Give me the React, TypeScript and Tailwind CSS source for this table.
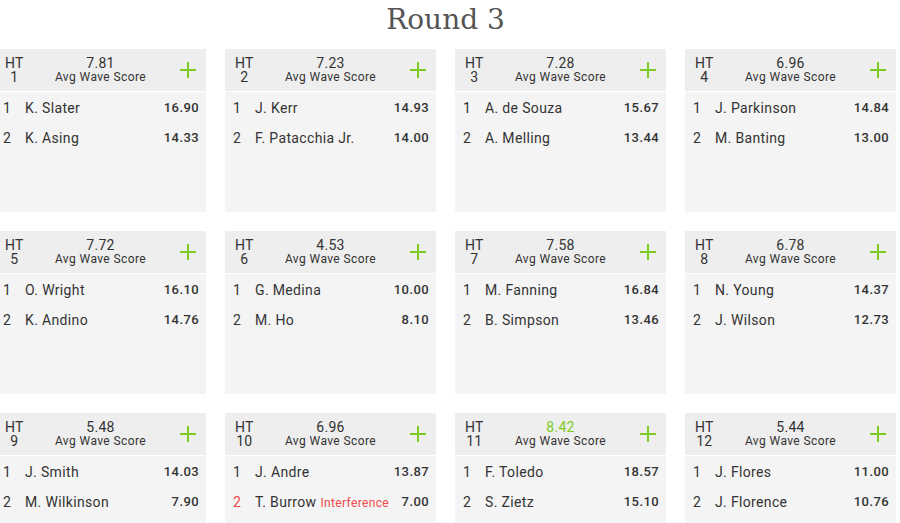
import React from "react";

type Surfer = { pos: number; name: string; score: string; interference?: boolean };
type Heat = { ht: number; avg: string; best?: boolean; surfers: Surfer[] };

const heats: Heat[] = [
  { ht: 1, avg: "7.81", surfers: [{ pos: 1, name: "K. Slater", score: "16.90" }, { pos: 2, name: "K. Asing", score: "14.33" }] },
  { ht: 2, avg: "7.23", surfers: [{ pos: 1, name: "J. Kerr", score: "14.93" }, { pos: 2, name: "F. Patacchia Jr.", score: "14.00" }] },
  { ht: 3, avg: "7.28", surfers: [{ pos: 1, name: "A. de Souza", score: "15.67" }, { pos: 2, name: "A. Melling", score: "13.44" }] },
  { ht: 4, avg: "6.96", surfers: [{ pos: 1, name: "J. Parkinson", score: "14.84" }, { pos: 2, name: "M. Banting", score: "13.00" }] },
  { ht: 5, avg: "7.72", surfers: [{ pos: 1, name: "O. Wright", score: "16.10" }, { pos: 2, name: "K. Andino", score: "14.76" }] },
  { ht: 6, avg: "4.53", surfers: [{ pos: 1, name: "G. Medina", score: "10.00" }, { pos: 2, name: "M. Ho", score: "8.10" }] },
  { ht: 7, avg: "7.58", surfers: [{ pos: 1, name: "M. Fanning", score: "16.84" }, { pos: 2, name: "B. Simpson", score: "13.46" }] },
  { ht: 8, avg: "6.78", surfers: [{ pos: 1, name: "N. Young", score: "14.37" }, { pos: 2, name: "J. Wilson", score: "12.73" }] },
  { ht: 9, avg: "5.48", surfers: [{ pos: 1, name: "J. Smith", score: "14.03" }, { pos: 2, name: "M. Wilkinson", score: "7.90" }] },
  { ht: 10, avg: "6.96", surfers: [{ pos: 1, name: "J. Andre", score: "13.87" }, { pos: 2, name: "T. Burrow", score: "7.00", interference: true }] },
  { ht: 11, avg: "8.42", best: true, surfers: [{ pos: 1, name: "F. Toledo", score: "18.57" }, { pos: 2, name: "S. Zietz", score: "15.10" }] },
  { ht: 12, avg: "5.44", surfers: [{ pos: 1, name: "J. Flores", score: "11.00" }, { pos: 2, name: "J. Florence", score: "10.76" }] },
];

function Plus() {
  return (
    <svg width="16" height="16" viewBox="0 0 16 16" className="block">
      <rect x="7" y="0" width="2" height="16" fill="#7ccc1e" />
      <rect x="0" y="7" width="16" height="2" fill="#7ccc1e" />
    </svg>
  );
}

function HeatCard({ heat }: { heat: Heat }) {
  return (
    <div className="h-[163px] bg-[#f4f4f4] flex flex-col">
      <div className="h-[43px] bg-[#eeeeee] border-b border-white grid grid-cols-[1fr_auto_1fr] items-center px-[10px] text-[#333]">
        <div className="flex flex-col items-start">
          <div className="flex flex-col items-center text-[14px] leading-[14px] tracking-[0.3px]">
            <span>HT</span>
            <span>{heat.ht}</span>
          </div>
        </div>
        <div className="flex flex-col items-center">
          <span className={`text-[14px] leading-[14px] tracking-[0.3px] ${heat.best ? "text-[#7ccc1e]" : "text-[#333]"}`}>{heat.avg}</span>
          <span className="text-[12px] leading-[14px] tracking-[0.4px] text-[#333]">Avg Wave Score</span>
        </div>
        <div className="flex justify-end">
          <Plus />
        </div>
      </div>
      <div className="flex flex-col pt-[1px]">
        {heat.surfers.map((s) => (
          <div key={s.pos} className="h-[30px] flex items-center pl-[8px] pr-[7px] text-[14px] text-[#333] tracking-[0.35px]">
            <span className={`w-[22px] ${s.interference ? "text-[#f24a4a]" : ""}`}>{s.pos}</span>
            <span className="flex-1 whitespace-nowrap">
              {s.name}
              {s.interference && <span className="ml-[4px] text-[12px] text-[#f24a4a]">Interference</span>}
            </span>
            <span className="font-medium text-[13px] tracking-[0.4px]">{s.score}</span>
          </div>
        ))}
      </div>
    </div>
  );
}

export default function App() {
  return (
    <div className="h-[523px] w-[900px] overflow-hidden bg-white" style={{ fontFamily: "Roboto, 'Liberation Sans', sans-serif" }}>
      <div className="w-[901px] -ml-[5px]">
        <h1
          className="h-[49px] pt-[2px] text-center text-[28px] leading-[36px] text-[#555]"
          style={{ fontFamily: "'DejaVu Serif', 'Liberation Serif', serif", fontWeight: 300 }}
        >
          Round 3
        </h1>
        <div className="grid grid-cols-4 gap-x-[19px] gap-y-[19px]">
          {heats.map((h) => (
            <HeatCard key={h.ht} heat={h} />
          ))}
        </div>
      </div>
    </div>
  );
}
